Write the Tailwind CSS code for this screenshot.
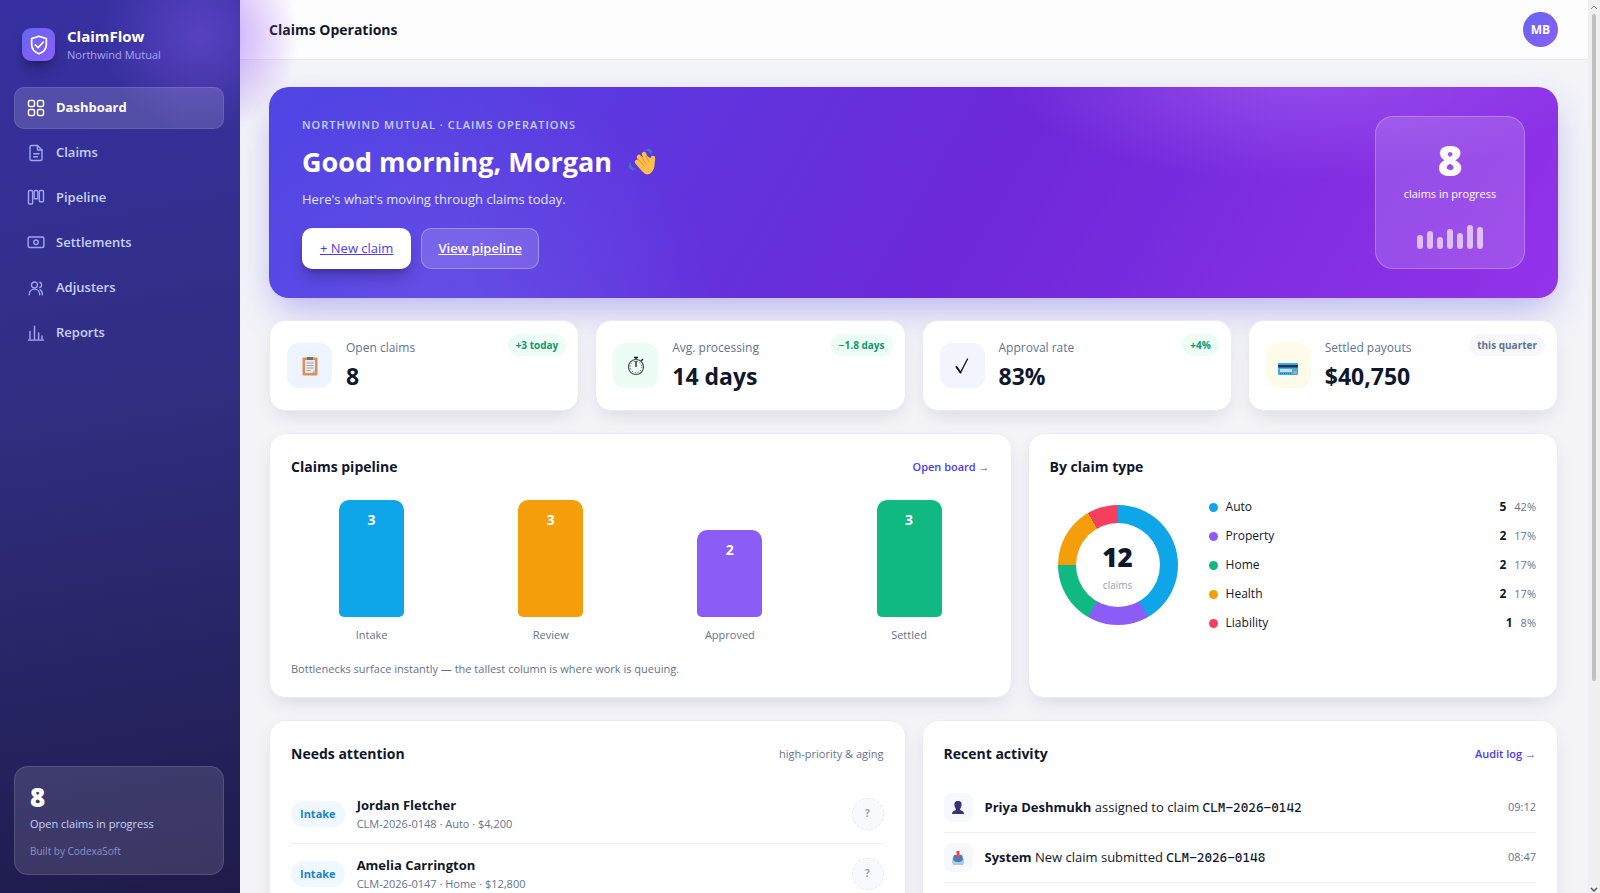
<!DOCTYPE html>
<html lang="en">
<head>
    <meta charset="UTF-8">
    <meta name="viewport" content="width=device-width, initial-scale=1.0">
    <title>ClaimFlow - Claims Operations</title>
    <script src="https://cdn.jsdelivr.net/npm/@tailwindcss/browser@4"></script>
</head>
<body class="flex h-screen overflow-hidden bg-[#f3f3f8] font-['Segoe_UI','Open_Sans',sans-serif] text-slate-900">
    <aside class="relative z-20 flex w-60 shrink-0 flex-col bg-linear-170 from-[#3730a3] via-[#312e81] via-45% to-[#1e1b4b] pt-[26px] pr-4 pb-[18px] pl-3.5">
        <div class="pointer-events-none absolute -top-[65px] -right-[60px] h-[200px] w-[200px] rounded-full bg-radial from-[#8b5cf6]/40 to-transparent to-70%"></div>
        <div class="relative flex items-center gap-3 px-2 pb-6">
            <div class="flex size-[33px] items-center justify-center rounded-[9px] bg-linear-135 from-[#6366f1] to-[#8b5cf6] shadow-lg shadow-black/30">
                <svg class="size-[22px]" viewBox="0 0 24 24" fill="none" stroke="white" stroke-width="1.9" stroke-linecap="round" stroke-linejoin="round">
                    <path d="M12 2.500 20 5v6.500c0 5-3.400 8.300-8 10-4.600-1.700-8-5-8-10V5z"/><path d="m8 12 3 3 5.500-6"/>
                </svg>
            </div>
            <div>
                <div class="text-[15px] leading-5 font-bold text-white">ClaimFlow</div>
                <div class="text-[11px] leading-[17px] text-[#a5a8f5]">Northwind Mutual</div>
            </div>
        </div>
        <nav class="relative flex flex-col gap-[3px] text-[13px] font-semibold text-indigo-200">
            <a href="#" class="flex h-[42px] items-center gap-[11px] rounded-[10px] border border-white/10 bg-white/15 px-3 font-bold text-white">
                <svg class="size-[18px]" viewBox="0 0 24 24" fill="none" stroke="currentColor" stroke-width="2"><rect x="2" y="2" width="8" height="8" rx="2"/><rect x="14" y="2" width="8" height="8" rx="2"/><rect x="2" y="14" width="8" height="8" rx="2"/><rect x="14" y="14" width="8" height="8" rx="2"/></svg>
                Dashboard
            </a>
            <a href="#" class="flex h-[42px] items-center gap-[11px] rounded-[10px] border border-transparent px-3">
                <svg class="size-[18px] text-[#a0a5f5]" viewBox="0 0 24 24" fill="none" stroke="currentColor" stroke-width="1.900" stroke-linecap="round" stroke-linejoin="round"><path d="M14 2H6a2 2 0 0 0-2 2v16a2 2 0 0 0 2 2h12a2 2 0 0 0 2-2V8z"/><path d="M14 2v6h6M9 13h7M9 17h5"/></svg>
                Claims
            </a>
            <a href="#" class="flex h-[42px] items-center gap-[11px] rounded-[10px] border border-transparent px-3">
                <svg class="size-[18px] text-[#a0a5f5]" viewBox="0 0 24 24" fill="none" stroke="currentColor" stroke-width="1.900"><rect x="2" y="2" width="5.500" height="18" rx="1.500"/><rect x="9.500" y="2" width="5" height="11" rx="1.500"/><rect x="16.500" y="2" width="5.500" height="15" rx="1.500"/></svg>
                Pipeline
            </a>
            <a href="#" class="flex h-[42px] items-center gap-[11px] rounded-[10px] border border-transparent px-3">
                <svg class="size-[18px] text-[#a0a5f5]" viewBox="0 0 24 24" fill="none" stroke="currentColor" stroke-width="1.900"><rect x="1.500" y="4" width="21" height="14" rx="2"/><circle cx="12" cy="11" r="3"/></svg>
                Settlements
            </a>
            <a href="#" class="flex h-[42px] items-center gap-[11px] rounded-[10px] border border-transparent px-3">
                <svg class="size-[18px] text-[#a0a5f5]" viewBox="0 0 24 24" fill="none" stroke="currentColor" stroke-width="1.900" stroke-linecap="round"><circle cx="10" cy="8" r="4"/><path d="M3 21c0-4.500 3-7.500 7-7.500s7 3 7 7.500M17 4.300a4 4 0 0 1 0 7.400M17.500 14.500c2 1 3 3.500 3 6.500"/></svg>
                Adjusters
            </a>
            <a href="#" class="flex h-[42px] items-center gap-[11px] rounded-[10px] border border-transparent px-3">
                <svg class="size-[18px] text-[#a0a5f5]" viewBox="0 0 24 24" fill="none" stroke="currentColor" stroke-width="1.900" stroke-linecap="round"><path d="M2 21.500h20M4 21V10M10 21V3M15.500 21v-9M20 21v-5"/></svg>
                Reports
            </a>
        </nav>
        <div class="relative mt-auto rounded-[14px] border border-white/12 bg-white/12 px-[15px] pt-4 pb-[15px]">
            <div class="text-[26px] leading-7 font-extrabold text-white">8</div>
            <div class="mt-1 text-[11px] leading-[18px] text-indigo-200">Open claims in progress</div>
            <div class="mt-2.5 text-[10px] leading-4 text-[#8f8fc8]">Built by CodexaSoft</div>
        </div>
    </aside>

    <div class="relative flex min-w-0 flex-1 flex-col">
        <div class="pointer-events-none absolute -top-[60px] -left-[140px] z-10 size-[200px] rounded-full bg-radial from-[#a855f7]/35 to-transparent to-70%"></div>
        <header class="flex h-[60px] shrink-0 items-center justify-between border-b border-[#e9e8f3] bg-[#fdfdfe] pr-[30px] pl-[29px]">
            <h1 class="text-sm font-bold">Claims Operations</h1>
            <button class="size-[35px] rounded-full bg-linear-135 from-[#6366f1] to-[#8b5cf6] text-xs font-bold text-white">MB</button>
        </header>

        <main class="flex flex-1 flex-col gap-[22px] overflow-hidden pt-[27px] pr-[30px] pl-[29px]">
            <section class="flex shrink-0 items-center justify-between rounded-[20px] bg-[radial-gradient(ellipse_300px_110px_at_80%_-8%,#c084fc60,transparent),radial-gradient(circle_at_14%_120%,#818cf845,transparent_24%),linear-gradient(120deg,#4f46e5,#6d28d9_55%,#9333ea)] px-[33px] py-[29px] shadow-[0_16px_36px_-6px_#4f46e560]">
                <div class="text-white">
                    <p class="text-[11px] leading-[18px] font-semibold tracking-[1px] text-indigo-200">NORTHWIND MUTUAL · CLAIMS OPERATIONS</p>
                    <h2 class="mt-2 flex items-center gap-4 text-[27px] leading-10 font-bold">
                        Good morning, Morgan
                        <svg class="size-7" viewBox="0 0 28 28" fill="none" stroke-linecap="round"><g stroke="#fbbf4b" stroke-width="4.500"><path d="m9 14 7 8M11 9l8 10M16 6l5 12M25 10l-1 9"/></g><path d="M9 14l8-7 9 5v8q-3 8-9 6z" fill="#fbbf4b"/><path d="m10 11 6 7M13 8l5 8M18 8l3 6" stroke="#e9982e" stroke-width="1"/><path d="M17 2q5 0 6 4M20 1q3 1 4 3M2 15q0 5 5 6M1 18q1 3 4 4" stroke="#3b82b8" stroke-width="1.200"/></svg>
                    </h2>
                    <p class="mt-1 text-[13px] leading-[26px] text-indigo-100">Here's what's moving through claims today.</p>
                    <div class="mt-4 flex gap-2.5 text-[13px] font-medium underline">
                        <a href="#" class="flex h-[41px] items-center rounded-[10px] bg-white px-[18px] text-indigo-600 shadow-lg shadow-black/25">+ New claim</a>
                        <a href="#" class="flex h-[41px] items-center rounded-[10px] border border-white/30 bg-white/15 px-4 font-semibold">View pipeline</a>
                    </div>
                </div>
                <div class="flex h-[153px] w-[150px] flex-col items-center rounded-[18px] border border-white/25 bg-white/15 pt-[19px] text-white">
                    <div class="text-[42px] leading-[48px] font-extrabold">8</div>
                    <div class="text-[11px] leading-5">claims in progress</div>
                    <div class="mt-[21px] flex h-6 items-end gap-1">
                        <span class="h-3.5 w-1.5 rounded-full bg-white/65"></span>
                        <span class="h-[18px] w-1.5 rounded-full bg-white/65"></span>
                        <span class="h-3 w-1.5 rounded-full bg-white/65"></span>
                        <span class="h-5 w-1.5 rounded-full bg-white/65"></span>
                        <span class="h-4 w-1.5 rounded-full bg-white/65"></span>
                        <span class="h-6 w-1.5 rounded-full bg-white/65"></span>
                        <span class="h-[22px] w-1.5 rounded-full bg-white/65"></span>
                    </div>
                </div>
            </section>

            <section class="grid shrink-0 grid-cols-4 gap-4">
                <article class="flex h-[91px] items-center gap-3.5 rounded-2xl border border-[#ebebf3] bg-white pr-3 pl-[17px] shadow-[0_8px_20px_-6px_#0f172a22]">
                    <div class="flex size-[45px] shrink-0 items-center justify-center rounded-xl bg-[#eef4ff]">
                        <svg class="size-5" viewBox="0 0 20 20"><rect x="2.500" y="1.500" width="15" height="18" rx="1" fill="#dc9255"/><path d="M5 4h10v13H5z" fill="#e8e9ee"/><path d="M7 1h6v3H7z" fill="#6b6f7c"/><path d="M6.500 7h7M6.500 9.500h7M6.500 12h7M6.500 14.500h4" stroke="#a4a8b3"/><path d="m12 17 3-3v3z" fill="#b4b8c3"/></svg>
                    </div>
                    <div class="min-w-0 flex-1"><div class="text-xs leading-5 text-slate-500">Open claims</div><div class="text-[23px] leading-9 font-bold">8</div></div>
                    <span class="mt-[13px] self-start rounded-full bg-[#ecfdf5] px-2 text-[10px] leading-[22px] font-bold text-[#12976b]">+3 today</span>
                </article>
                <article class="flex h-[91px] items-center gap-3.5 rounded-2xl border border-[#ebebf3] bg-white pr-3 pl-[17px] shadow-[0_8px_20px_-6px_#0f172a22]">
                    <div class="flex size-[45px] shrink-0 items-center justify-center rounded-xl bg-[#ecfdf5]">
                        <svg class="size-5" viewBox="0 0 20 20" fill="none" stroke="#454b55"><circle cx="10" cy="11" r="7.500" stroke-width="1.200"/><circle cx="10" cy="11" r="5.700" stroke-dasharray="1 2"/><path d="M10 11V5M10 3V1M8 1.500h4M15 5l2-2" stroke="#111827" stroke-width="1.300"/></svg>
                    </div>
                    <div class="min-w-0 flex-1"><div class="text-xs leading-5 text-slate-500">Avg. processing</div><div class="text-[23px] leading-9 font-bold">14 days</div></div>
                    <span class="mt-[13px] self-start rounded-full bg-[#ecfdf5] px-2 text-[10px] leading-[22px] font-bold text-[#12976b]">−1.8 days</span>
                </article>
                <article class="flex h-[91px] items-center gap-3.5 rounded-2xl border border-[#ebebf3] bg-white pr-3 pl-[17px] shadow-[0_8px_20px_-6px_#0f172a22]">
                    <div class="flex size-[45px] shrink-0 items-center justify-center rounded-xl bg-[#f2f5fe]">
                        <svg class="size-5" viewBox="0 0 20 20" fill="none" stroke="#0b0f19" stroke-linecap="round"><path d="m4.500 11 4 5.500" stroke-width="2"/><path d="M8.500 16.500 15.500 3" stroke-width="1.300"/></svg>
                    </div>
                    <div class="min-w-0 flex-1"><div class="text-xs leading-5 text-slate-500">Approval rate</div><div class="text-[23px] leading-9 font-bold">83%</div></div>
                    <span class="mt-[13px] self-start rounded-full bg-[#ecfdf5] px-2 text-[10px] leading-[22px] font-bold text-[#12976b]">+4%</span>
                </article>
                <article class="flex h-[91px] items-center gap-3.5 rounded-2xl border border-[#ebebf3] bg-white pr-3 pl-[17px] shadow-[0_8px_20px_-6px_#0f172a22]">
                    <div class="flex size-[45px] shrink-0 items-center justify-center rounded-xl bg-[#fffbeb]">
                        <svg class="size-5" viewBox="0 0 20 20"><rect y="7" width="20" height="12" rx="1" fill="#35aeea"/><path d="M0 9h20v2.500H0z" fill="#29324f"/><path d="M2 13h12v3H2z" fill="#d5d9ec"/><circle cx="17" cy="16.500" r="1.700" fill="#e9a04c"/><path d="M2 17.500h11" stroke="#1e78b8" stroke-dasharray="1 1"/></svg>
                    </div>
                    <div class="min-w-0 flex-1"><div class="text-xs leading-5 text-slate-500">Settled payouts</div><div class="text-[23px] leading-9 font-bold">$40,750</div></div>
                    <span class="mt-[13px] self-start rounded-full bg-[#f7f8fc] px-2 text-[10px] leading-[22px] font-bold text-slate-500">this quarter</span>
                </article>
            </section>

            <section class="grid shrink-0 grid-cols-[1.4fr_1fr] gap-4">
                <article class="h-[265px] rounded-2xl border border-[#ebebf3] bg-white px-[21px] pt-[21px] shadow-[0_8px_20px_-6px_#0f172a22]">
                    <div class="flex items-center justify-between">
                        <h3 class="text-sm leading-6 font-bold">Claims pipeline</h3>
                        <a href="#" class="text-[11px] font-semibold text-indigo-600">Open board →</a>
                    </div>
                    <div class="mt-5 grid h-[146px] grid-cols-4 items-end gap-[18px] text-center text-[11px] leading-5 font-medium text-slate-500">
                        <div>
                            <div class="mx-auto h-[117px] w-[65px] rounded-t-[10px] rounded-b-[5px] bg-[#0ea5e9] pt-2.5 text-sm leading-5 font-bold text-white">3</div>
                            <div class="mt-2">Intake</div>
                        </div>
                        <div>
                            <div class="mx-auto h-[117px] w-[65px] rounded-t-[10px] rounded-b-[5px] bg-[#f59e0b] pt-2.5 text-sm leading-5 font-bold text-white">3</div>
                            <div class="mt-2">Review</div>
                        </div>
                        <div>
                            <div class="mx-auto h-[87px] w-[65px] rounded-t-[10px] rounded-b-[5px] bg-[#8b5cf6] pt-2.5 text-sm leading-5 font-bold text-white">2</div>
                            <div class="mt-2">Approved</div>
                        </div>
                        <div>
                            <div class="mx-auto h-[117px] w-[65px] rounded-t-[10px] rounded-b-[5px] bg-[#10b981] pt-2.5 text-sm leading-5 font-bold text-white">3</div>
                            <div class="mt-2">Settled</div>
                        </div>
                    </div>
                    <p class="mt-3.5 text-[11px] leading-5 text-slate-500">Bottlenecks surface instantly — the tallest column is where work is queuing.</p>
                </article>
                <article class="h-[265px] rounded-2xl border border-[#ebebf3] bg-white px-[21px] pt-[21px] shadow-[0_8px_20px_-6px_#0f172a22]">
                    <h3 class="text-sm leading-6 font-bold">By claim type</h3>
                    <div class="mt-[18px] flex items-center gap-[23px]">
                        <div class="flex size-[136px] shrink-0 items-center justify-center">
                            <div class="flex size-[120px] items-center justify-center rounded-full bg-[conic-gradient(#0ea5e9_0_150deg,#8b5cf6_150deg_210deg,#10b981_210deg_270deg,#f59e0b_270deg_330deg,#f43f5e_330deg)]">
                                <div class="flex size-[84px] flex-col items-center justify-center rounded-full bg-white pt-1">
                                    <div class="text-[26px] leading-9 font-extrabold">12</div>
                                    <div class="text-[10px] leading-5 text-slate-400">claims</div>
                                </div>
                            </div>
                        </div>
                        <ul class="flex flex-1 flex-col gap-[9px] text-xs leading-5">
                            <li class="flex items-center gap-2"><span class="size-[9px] rounded-full bg-[#0ea5e9]"></span>Auto<b class="ml-auto">5</b><span class="text-[11px] text-slate-500">42%</span></li>
                            <li class="flex items-center gap-2"><span class="size-[9px] rounded-full bg-[#8b5cf6]"></span>Property<b class="ml-auto">2</b><span class="text-[11px] text-slate-500">17%</span></li>
                            <li class="flex items-center gap-2"><span class="size-[9px] rounded-full bg-[#10b981]"></span>Home<b class="ml-auto">2</b><span class="text-[11px] text-slate-500">17%</span></li>
                            <li class="flex items-center gap-2"><span class="size-[9px] rounded-full bg-[#f59e0b]"></span>Health<b class="ml-auto">2</b><span class="text-[11px] text-slate-500">17%</span></li>
                            <li class="flex items-center gap-2"><span class="size-[9px] rounded-full bg-[#f43f5e]"></span>Liability<b class="ml-auto">1</b><span class="text-[11px] text-slate-500">8%</span></li>
                        </ul>
                    </div>
                </article>
            </section>

            <section class="grid shrink-0 grid-cols-2 gap-4">
                <article class="rounded-2xl border border-[#ebebf3] bg-white px-[21px] pt-[21px] pb-5 shadow-[0_8px_20px_-6px_#0f172a22]">
                    <div class="flex items-center justify-between">
                        <h3 class="text-sm leading-6 font-bold">Needs attention</h3>
                        <span class="text-[11px] text-slate-500">high-priority &amp; aging</span>
                    </div>
                    <ul class="mt-[18px]">
                        <li class="flex h-[60px] items-center gap-3 border-b border-[#eeeef5]">
                            <span class="rounded-full bg-[#eff8ff] px-[9px] text-[11px] leading-[26px] font-bold text-[#1a84c9]">Intake</span>
                            <div class="flex-1">
                                <div class="text-[13px] leading-5 font-bold">Jordan Fletcher</div>
                                <div class="text-[11px] leading-[18px] text-slate-500">CLM-2026-0148 · Auto · $4,200</div>
                            </div>
                            <button class="size-8 rounded-full border border-dashed border-slate-200 bg-[#f8f9fd] text-[10px] font-bold text-slate-400">?</button>
                        </li>
                        <li class="flex h-[60px] items-center gap-3 border-b border-[#eeeef5]">
                            <span class="rounded-full bg-[#eff8ff] px-[9px] text-[11px] leading-[26px] font-bold text-[#1a84c9]">Intake</span>
                            <div class="flex-1">
                                <div class="text-[13px] leading-5 font-bold">Amelia Carrington</div>
                                <div class="text-[11px] leading-[18px] text-slate-500">CLM-2026-0147 · Home · $12,800</div>
                            </div>
                            <button class="size-8 rounded-full border border-dashed border-slate-200 bg-[#f8f9fd] text-[10px] font-bold text-slate-400">?</button>
                        </li>
                    </ul>
                </article>
                <article class="rounded-2xl border border-[#ebebf3] bg-white px-[21px] pt-[21px] pb-5 shadow-[0_8px_20px_-6px_#0f172a22]">
                    <div class="flex items-center justify-between">
                        <h3 class="text-sm leading-6 font-bold">Recent activity</h3>
                        <a href="#" class="text-[11px] font-semibold text-indigo-600">Audit log →</a>
                    </div>
                    <ul class="mt-[17px] text-[13px]">
                        <li class="flex h-[50px] items-center gap-3 border-b border-[#eeeef5]">
                            <span class="flex size-[29px] items-center justify-center rounded-lg bg-[#f7f8fd]">
                                <svg class="size-3.5" viewBox="0 0 14 14" fill="#373476"><path d="M7 0c3 0 4 2 3.500 4.500C10 7 9 8 9 8.500c0 1 4 1 4 4.500H1c0-3.500 4-3.500 4-4.500C5 8 4 7 3.500 4.500 3 2 4 0 7 0z"/></svg>
                            </span>
                            <p class="flex-1"><b>Priya Deshmukh</b> assigned to claim <span class="font-['Cascadia_Mono','DejaVu_Sans_Mono',monospace]">CLM-2026-0142</span></p>
                            <time class="text-[11px] text-slate-500">09:12</time>
                        </li>
                        <li class="flex h-[50px] items-center gap-3 border-b border-[#eeeef5]">
                            <span class="flex size-[29px] items-center justify-center rounded-lg bg-[#f7f8fd]">
                                <svg class="size-3.5" viewBox="0 0 14 14"><path d="M2 5h10l1 6-1 3H2l-1-3z" fill="#bcc5d4"/><path d="M3 4h8l1 5-3 2H5L2 9z" fill="#3286c8"/><path d="M5.500 0h3v4h2L7 7.500 3.500 4h2z" fill="#e6475d"/></svg>
                            </span>
                            <p class="flex-1"><b>System</b> New claim submitted <span class="font-['Cascadia_Mono','DejaVu_Sans_Mono',monospace]">CLM-2026-0148</span></p>
                            <time class="text-[11px] text-slate-500">08:47</time>
                        </li>
                        <li class="flex h-[50px] items-center"><span class="size-[29px] rounded-lg bg-[#f7f8fd]"></span></li>
                    </ul>
                </article>
            </section>
        </main>
    </div>

    <!-- scrollbar -->
    <div class="flex w-3 shrink-0 flex-col items-center justify-between bg-[#f0f0f1] pt-1">
        <svg class="h-1.5 w-2" viewBox="0 0 8 6" fill="none" stroke="#8b8b8b"><path d="m1 5 3-3 3 3"/></svg>
        <div class="mt-1 mb-auto h-[75%] w-1 rounded-full bg-[#c1c1c1]"></div>
        <svg class="h-1.5 w-2" viewBox="0 0 8 6" fill="none" stroke="#505050" stroke-width="1.500"><path d="m1 1 3 3 3-3"/></svg>
    </div>
</body>
</html>
